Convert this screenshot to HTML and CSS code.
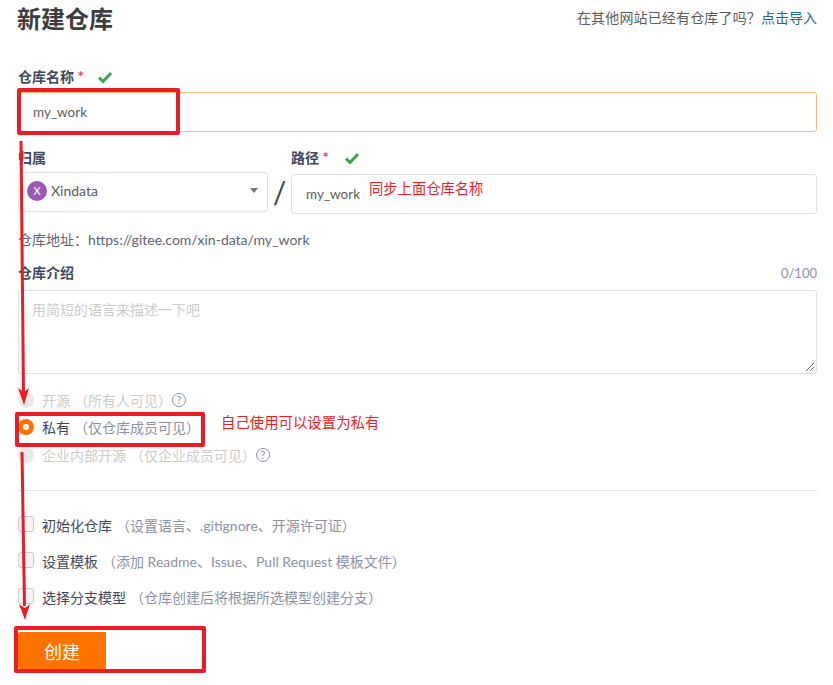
FILE: index.html
```html
<!DOCTYPE html>
<html lang="zh-CN">
  <head>
    <meta charset="UTF-8" />
    <meta name="viewport" content="width=device-width, initial-scale=1.0" />
    <title>新建仓库</title>
    <link rel="stylesheet" href="styles.css">
  </head>
  <body>
    <div class="page">
      <div class="header">
        <h1>新建仓库</h1>
        <p class="import">在其他网站已经有仓库了吗？<a href="#">点击导入</a></p>
      </div>

      <div class="field name-field">
        <label class="label">
          仓库名称 <span class="required">*</span>
          <svg class="check" viewBox="0 0 14 12"><path d="M1 6.5 5 10.5 13 2" /></svg>
        </label>
        <div class="input focused">my_work</div>
      </div>

      <div class="owner-row">
        <div class="owner">
          <label class="label owner-label">归属</label>
          <div class="select">
            <span class="avatar">X</span>
            <span class="owner-name">Xindata</span>
            <span class="caret"></span>
          </div>
        </div>
        <div class="slash">/</div>
        <div class="path">
          <label class="label path-label">
            路径 <span class="required">*</span>
            <svg class="check check-path" viewBox="0 0 14 12"><path d="M1 6.5 5 10.5 13 2" /></svg>
          </label>
          <div class="input">my_work</div>
        </div>
      </div>

      <p class="address">仓库地址：https://gitee.com/xin-data/my_work</p>

      <div class="intro-head">
        <label class="label">仓库介绍</label>
        <span class="count">0/100</span>
      </div>
      <div class="textarea">
        用简短的语言来描述一下吧
        <svg class="grip" viewBox="0 0 10 10"><path d="M9 1 1 9M9 5 5 9" /></svg>
      </div>

      <div class="radios">
        <div class="radio-row disabled">
          <span class="radio"></span>
          <span class="opt">开源</span>
          <span class="hint">（所有人可见）</span>
          <span class="help">?</span>
        </div>
        <div class="radio-row">
          <span class="radio on"></span>
          <span class="opt">私有</span>
          <span class="hint">（仅仓库成员可见）</span>
        </div>
        <div class="radio-row disabled">
          <span class="radio"></span>
          <span class="opt">企业内部开源</span>
          <span class="hint">（仅企业成员可见）</span>
          <span class="help">?</span>
        </div>
      </div>

      <div class="divider"></div>

      <div class="checks">
        <div class="check-row">
          <span class="box"></span>
          <span class="opt">初始化仓库</span>
          <span class="hint">（设置语言、.gitignore、开源许可证）</span>
        </div>
        <div class="check-row">
          <span class="box"></span>
          <span class="opt">设置模板</span>
          <span class="hint">（添加 Readme、Issue、Pull Request 模板文件）</span>
        </div>
        <div class="check-row">
          <span class="box"></span>
          <span class="opt">选择分支模型</span>
          <span class="hint">（仓库创建后将根据所选模型创建分支）</span>
        </div>
      </div>

      <button class="submit">创建</button>

      <!-- red marks drawn on top of the screenshot -->
      <div class="mark mark-name"></div>
      <div class="mark mark-private"></div>
      <div class="mark mark-submit"></div>
      <span class="note note-path">同步上面仓库名称</span>
      <span class="note note-private">自己使用可以设置为私有</span>
      <svg class="arrows" viewBox="0 0 40 685">
        <path class="shaft" d="M21 141 23.5 392" />
        <path class="head" d="M18 388 24 392 29 388 24 405Z" />
        <path class="shaft" d="M22 452 24.5 606" />
        <path class="head" d="M19 604 25 608 30 604 25 620Z" />
      </svg>
    </div>
  </body>
</html>
```

FILE: styles.css
```css
* {
  box-sizing: border-box;
}

body {
  margin: 0;
  font-family: "Lato", "Noto Sans CJK SC", sans-serif;
  font-size: 14px;
  color: #40485b;
  background-color: #fff;
}

.page {
  position: relative;
  width: 833px;
  height: 685px;
  padding: 0 16px 0 18px;
  overflow: hidden;
}

.header {
  display: flex;
  justify-content: space-between;
  align-items: flex-start;
  height: 38px;
}

h1 {
  margin: 0 0 0 -1px;
  font-size: 24px;
  font-weight: 700;
  line-height: 38px;
  color: #3d3d3d;
}

.import {
  margin: 8px 0 0;
  font-size: 14px;
  line-height: 20px;
  letter-spacing: 0.16px;
  color: #5c5c5c;
}

.import a {
  letter-spacing: 0;
  color: #1c6a8e;
  text-decoration: none;
}

.label {
  display: block;
  font-size: 14px;
  font-weight: 700;
  line-height: 20px;
  color: #40485b;
}

.required {
  font-size: 15px;
  line-height: 0;
  color: #e5484d;
}

.check {
  width: 14px;
  height: 12px;
  margin-left: 11px;
  vertical-align: -1px;
}

.check-path {
  margin-left: 13px;
}

.check path {
  fill: none;
  stroke: #3fa64a;
  stroke-width: 3;
}

.name-field {
  margin-top: 29px;
}

.name-field .label {
  margin-bottom: 5px;
}

.input {
  height: 40px;
  padding-left: 14px;
  font-size: 13.5px;
  line-height: 38px;
  color: #5c5c5c;
  border: 1px solid #dfe1ea;
  border-radius: 3px;
}

.input.focused {
  border-color: #ffb87a;
}

.owner-row {
  display: flex;
  margin-top: 16px;
}

.owner {
  width: 250px;
}

.owner-label {
  margin-bottom: 4px;
}

.select {
  display: flex;
  align-items: center;
  height: 40px;
  padding: 0 9px 3px 8px;
  border: 1px solid #dfe1ea;
  border-radius: 3px;
}

.avatar {
  display: flex;
  justify-content: center;
  align-items: center;
  width: 20px;
  height: 20px;
  margin-right: 4px;
  font-size: 11px;
  color: #fff;
  background-color: #9b59b6;
  border-radius: 50%;
}

.owner-name {
  flex: 1;
  color: #5c5c5c;
}

.caret {
  width: 0;
  height: 0;
  border-top: 5px solid #777;
  border-left: 4px solid transparent;
  border-right: 4px solid transparent;
}

.slash {
  width: 23px;
  margin-top: 24px;
  font-size: 30px;
  font-weight: 400;
  line-height: 40px;
  text-align: center;
  color: #40485b;
}

.path {
  flex: 1;
}

.path-label {
  margin-bottom: 6px;
}

.address {
  margin: 16px 0 0;
  line-height: 20px;
  color: #606472;
}

.intro-head {
  display: flex;
  justify-content: space-between;
  margin-top: 13px;
}

.count {
  font-size: 13px;
  line-height: 20px;
  color: #8c92a4;
}

.textarea {
  position: relative;
  height: 84px;
  margin-top: 7px;
  padding: 9px 13px;
  line-height: 20px;
  color: #ccc;
  border: 1px solid #dfe1ea;
  border-radius: 3px;
}

.grip {
  position: absolute;
  right: 1px;
  bottom: 1px;
  width: 10px;
  height: 10px;
}

.grip path {
  fill: none;
  stroke: #666;
  stroke-width: 1;
}

.radios {
  margin-top: 12px;
}

.radio-row {
  display: flex;
  align-items: center;
  height: 27.5px;
}

.radio {
  flex: none;
  width: 16px;
  height: 16px;
  margin-right: 8px;
  background-color: #e9e9e9;
  border-radius: 50%;
}

.radio.on {
  background-color: #fff;
  border: 5px solid #fe7300;
}

.opt {
  color: #40485b;
}

.hint {
  margin-left: 4px;
  color: #8c92a4;
}

.disabled .opt,
.disabled .hint {
  color: #ccc;
}

.help {
  display: flex;
  justify-content: center;
  align-items: center;
  width: 14px;
  height: 14px;
  font-size: 11px;
  font-weight: 400;
  color: #8c92a4;
  border: 1.5px solid #8c92a4;
  border-radius: 50%;
}

.divider {
  height: 1px;
  margin-top: 21px;
  background-color: #e3e4ea;
}

.checks {
  margin-top: 16px;
}

.check-row {
  display: flex;
  align-items: center;
  height: 36px;
}

.box {
  flex: none;
  width: 16px;
  height: 16px;
  margin-top: -2px;
  margin-right: 8px;
  background-color: #f4f4f6;
  border: 1px solid #c9ccd6;
  border-radius: 3px;
}

.submit {
  display: block;
  width: 88px;
  height: 37px;
  margin-top: 17px;
  padding: 1px 0 0;
  font-family: inherit;
  font-size: 18px;
  color: #fff;
  background-color: #fe7300;
  border: none;
  border-radius: 2px 0 0 2px;
}

.mark {
  position: absolute;
  border: 4px solid #ed1c24;
  border-radius: 2px;
}

.mark-name {
  left: 17px;
  top: 88px;
  width: 163px;
  height: 47px;
}

.mark-private {
  left: 15px;
  top: 412px;
  width: 190px;
  height: 35px;
}

.mark-submit {
  left: 14px;
  top: 626px;
  width: 192px;
  height: 47px;
}

.note {
  position: absolute;
  line-height: 20px;
  color: #f01c24;
}

.note-path {
  left: 369px;
  top: 179px;
  font-size: 14.3px;
}

.note-private {
  left: 221px;
  top: 413px;
  font-size: 14.4px;
}

.arrows {
  position: absolute;
  left: 0;
  top: 0;
  width: 40px;
  height: 685px;
}

.arrows .shaft {
  fill: none;
  stroke: #ed1c24;
  stroke-width: 3;
}

.arrows .head {
  fill: #ed1c24;
}
```
